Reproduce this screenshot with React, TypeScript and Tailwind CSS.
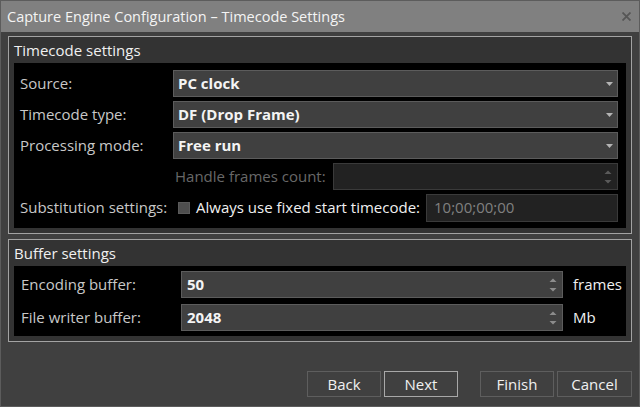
import React from "react";

const ui = "font-['Open_Sans','Noto_Sans',sans-serif]";

function DropArrow() {
    return (
        <svg width="7" height="4" viewBox="0 0 7 4" className="shrink-0">
            <path d="M0 0 H7 L3.5 4 Z" fill="#b4b4b4" />
        </svg>
    );
}

function SpinArrows({ color }: { color: string }) {
    return (
        <svg width="8" height="14" viewBox="0 0 8 14" className="shrink-0">
            <path d="M0.5 4 L4 0.5 L7.5 4 Z" fill={color} />
            <path d="M0.5 10 L4 13.5 L7.5 10 Z" fill={color} />
        </svg>
    );
}

function Combo({ value }: { value: string }) {
    return (
        <div className="flex h-[27px] items-center justify-between border border-[#5c5c5c] bg-[#404040] pr-[4px] pl-[4px]">
            <span className="text-[15px] font-bold text-[#f4f4f4]">{value}</span>
            <DropArrow />
        </div>
    );
}

function Group({ title, children }: { title: string; children: React.ReactNode }) {
    return (
        <div className="mx-[7px] border border-[#a3a3a3] bg-[#333333] px-[5px] pb-[5px]">
            <div className="flex h-[26px] items-center text-[15px] text-[#f0f0f0]">{title}</div>
            {children}
        </div>
    );
}

export default function App() {
    const labelClassName = "pl-[6px] text-[15px] text-[#c8c8c8] whitespace-nowrap";

    return (
        <div className={`${ui} flex h-[407px] w-[640px] flex-col border border-[#5c5c5c] bg-[#404040]`}>
            {/* title bar */}
            <div className="flex h-[31px] shrink-0 items-center justify-between bg-[#808080] pr-[8px] pl-[6px]">
                <span className="text-[14.5px] text-[#f4f4f4]">Capture Engine Configuration – Timecode Settings</span>
                <svg width="9" height="9" viewBox="0 0 9 9">
                    <path d="M0.5 0.5 L8.5 8.5 M8.5 0.5 L0.5 8.5" stroke="#565656" strokeWidth="1.8" />
                </svg>
            </div>

            <div className="mt-[4px] flex flex-col gap-[5px]">
                <Group title="Timecode settings">
                    <div className="grid grid-cols-[159px_1fr] items-center gap-y-[4px] bg-black py-[7px] pr-[8px]">
                        <span className={labelClassName}>Source:</span>
                        <Combo value="PC clock" />

                        <span className={labelClassName}>Timecode type:</span>
                        <Combo value="DF (Drop Frame)" />

                        <span className={labelClassName}>Processing mode:</span>
                        <Combo value="Free run" />

                        <span />
                        <div className="flex h-[27px] items-center justify-between">
                            <span className="pl-[2px] text-[15px] whitespace-nowrap text-[#686868]">Handle frames count:</span>
                            <div className="flex h-[27px] w-[285px] items-center justify-end border border-[#3a3a3a] bg-[#222222] pr-[5px]">
                                <SpinArrows color="#5a5a5a" />
                            </div>
                        </div>

                        <span className={labelClassName}>Substitution settings:</span>
                        <div className="flex h-[27px] items-center">
                            <span className="ml-[5px] h-[12px] w-[12px] shrink-0 border border-[#5a5a5a] bg-[#4e4e4e]" />
                            <span className="ml-[6px] text-[15px] whitespace-nowrap text-[#f0f0f0]">Always use fixed start timecode:</span>
                            <div className="ml-auto flex h-[28px] w-[192px] items-center border border-[#3a3a3a] bg-[#222222] pl-[7px]">
                                <span className="text-[15px] text-[#808080]">10;00;00;00</span>
                            </div>
                        </div>
                    </div>
                </Group>

                <Group title="Buffer settings">
                    <div className="grid grid-cols-[167px_382px_1fr] items-center gap-y-[6px] bg-black py-[5px]">
                        <span className="pl-[7px] text-[15px] text-[#c8c8c8]">Encoding buffer:</span>
                        <div className="flex h-[27px] items-center justify-between border border-[#5c5c5c] bg-[#404040] pr-[5px] pl-[5px]">
                            <span className="text-[15px] font-bold text-[#f4f4f4]">50</span>
                            <SpinArrows color="#8c8c8c" />
                        </div>
                        <span className="pl-[10px] text-[15px] text-[#f0f0f0]">frames</span>

                        <span className="pl-[7px] text-[15px] text-[#c8c8c8]">File writer buffer:</span>
                        <div className="flex h-[27px] items-center justify-between border border-[#5c5c5c] bg-[#404040] pr-[5px] pl-[5px]">
                            <span className="text-[15px] font-bold text-[#f4f4f4]">2048</span>
                            <SpinArrows color="#8c8c8c" />
                        </div>
                        <span className="pl-[10px] text-[15px] text-[#f0f0f0]">Mb</span>
                    </div>
                </Group>
            </div>

            {/* buttons */}
            <div className="mt-[29px] flex justify-end pr-[7px] text-[15px] text-[#f0f0f0]">
                <button className="h-[26px] w-[74px] border border-[#5e5e5e]">Back</button>
                <button className="ml-[3px] h-[26px] w-[74px] border border-[#a8a8a8]">Next</button>
                <button className="ml-[22px] h-[26px] w-[74px] border border-[#5e5e5e]">Finish</button>
                <button className="ml-[3px] h-[26px] w-[75px] border border-[#5e5e5e]">Cancel</button>
            </div>
        </div>
    );
}
